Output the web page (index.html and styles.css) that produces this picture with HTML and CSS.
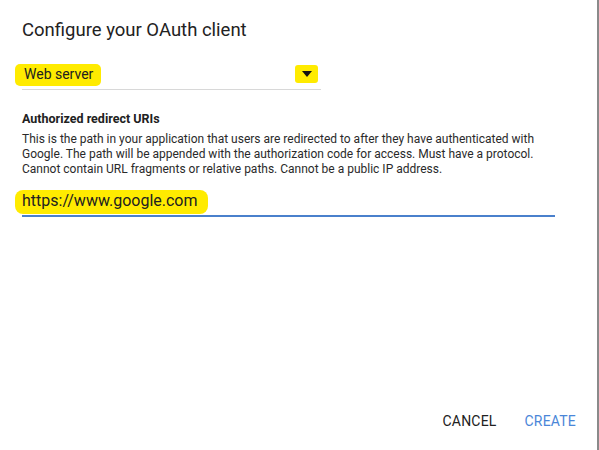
FILE: index.html
```html
<!DOCTYPE html>
<html>
<head>
<meta charset="utf-8">
<link rel="stylesheet" href="styles.css">
</head>
<body>
<div class="dialog">
  <h1 class="title">Configure your OAuth client</h1>
  <div class="select">
    <span class="mark select-value">Web server</span>
    <span class="mark arrow-mark"><svg width="10" height="6" viewBox="0 0 10 6"><path d="M0 0h10L5 6z" fill="#111"/></svg></span>
  </div>
  <div class="field">
    <div class="label">Authorized redirect URIs</div>
    <p class="desc">This is the path in your application that users are redirected to after they have authenticated with Google. The path will be appended with the authorization code for access. Must have a protocol. Cannot contain URL fragments or relative paths. Cannot be a public IP address.</p>
    <div class="input">
      <span class="mark url">https://www.google.com</span>
    </div>
  </div>
  <div class="spacer"></div>
  <div class="actions">
    <span class="btn">CANCEL</span>
    <span class="btn primary">CREATE</span>
  </div>
</div>
</body>
</html>
```
FILE: styles.css
```css
html, body {
  margin: 0;
  padding: 0;
  background: #fff;
}
body {
  font-family: Roboto, "Liberation Sans", sans-serif;
  color: #212121;
  width: 599px;
  height: 450px;
  overflow: hidden;
}
.dialog {
  box-sizing: border-box;
  width: 599px;
  height: 450px;
  padding: 17px 22px 0 22px;
  display: flex;
  flex-direction: column;
  border-right: 2px solid #8a8a8a;
}
.title {
  margin: 0;
  font-size: 18.5px;
  font-weight: 400;
  line-height: 26px;
  color: #222;
}
.mark {
  background: #ffeb00;
  border-radius: 5px;
}
.select {
  margin-top: 19px;
  width: 299px;
  height: 27px;
  border-bottom: 1px solid #d8d8d8;
  display: flex;
  align-items: center;
  justify-content: space-between;
}
.select-value {
  font-size: 14px;
  margin-left: -7px;
  padding: 3px 8px 4px 9px;
  line-height: 15px;
  margin-top: -2px;
}
.arrow-mark {
  width: 23px;
  height: 18px;
  display: flex;
  align-items: center;
  justify-content: center;
  margin-right: 3px;
  margin-top: -4px;
  border-radius: 3px;
}
.field {
  margin-top: 21px;
}
.label {
  font-size: 12.5px;
  font-weight: 700;
  line-height: 16px;
  color: #212121;
}
.desc {
  margin: 5px 0 0 0;
  font-size: 12px;
  line-height: 15px;
  color: #2a2a2a;
  width: 520px;
}
.input {
  margin-top: 13px;
  width: 533px;
  height: 25px;
  border-bottom: 2px solid #4a80cc;
  box-sizing: content-box;
}
.url {
  display: inline-block;
  font-size: 16px;
  line-height: 20px;
  margin-left: -7px;
  padding: 1px 10px 3px 7px;
  border-radius: 8px;
}
.spacer {
  flex: 1;
}
.actions {
  display: flex;
  justify-content: flex-end;
  gap: 28px;
  padding-bottom: 21px;
  margin-right: -1px;
}
.btn {
  font-size: 14px;
  line-height: 16px;
  color: #212121;
  letter-spacing: 0.2px;
}
.btn.primary {
  color: #4a86d8;
}
```
